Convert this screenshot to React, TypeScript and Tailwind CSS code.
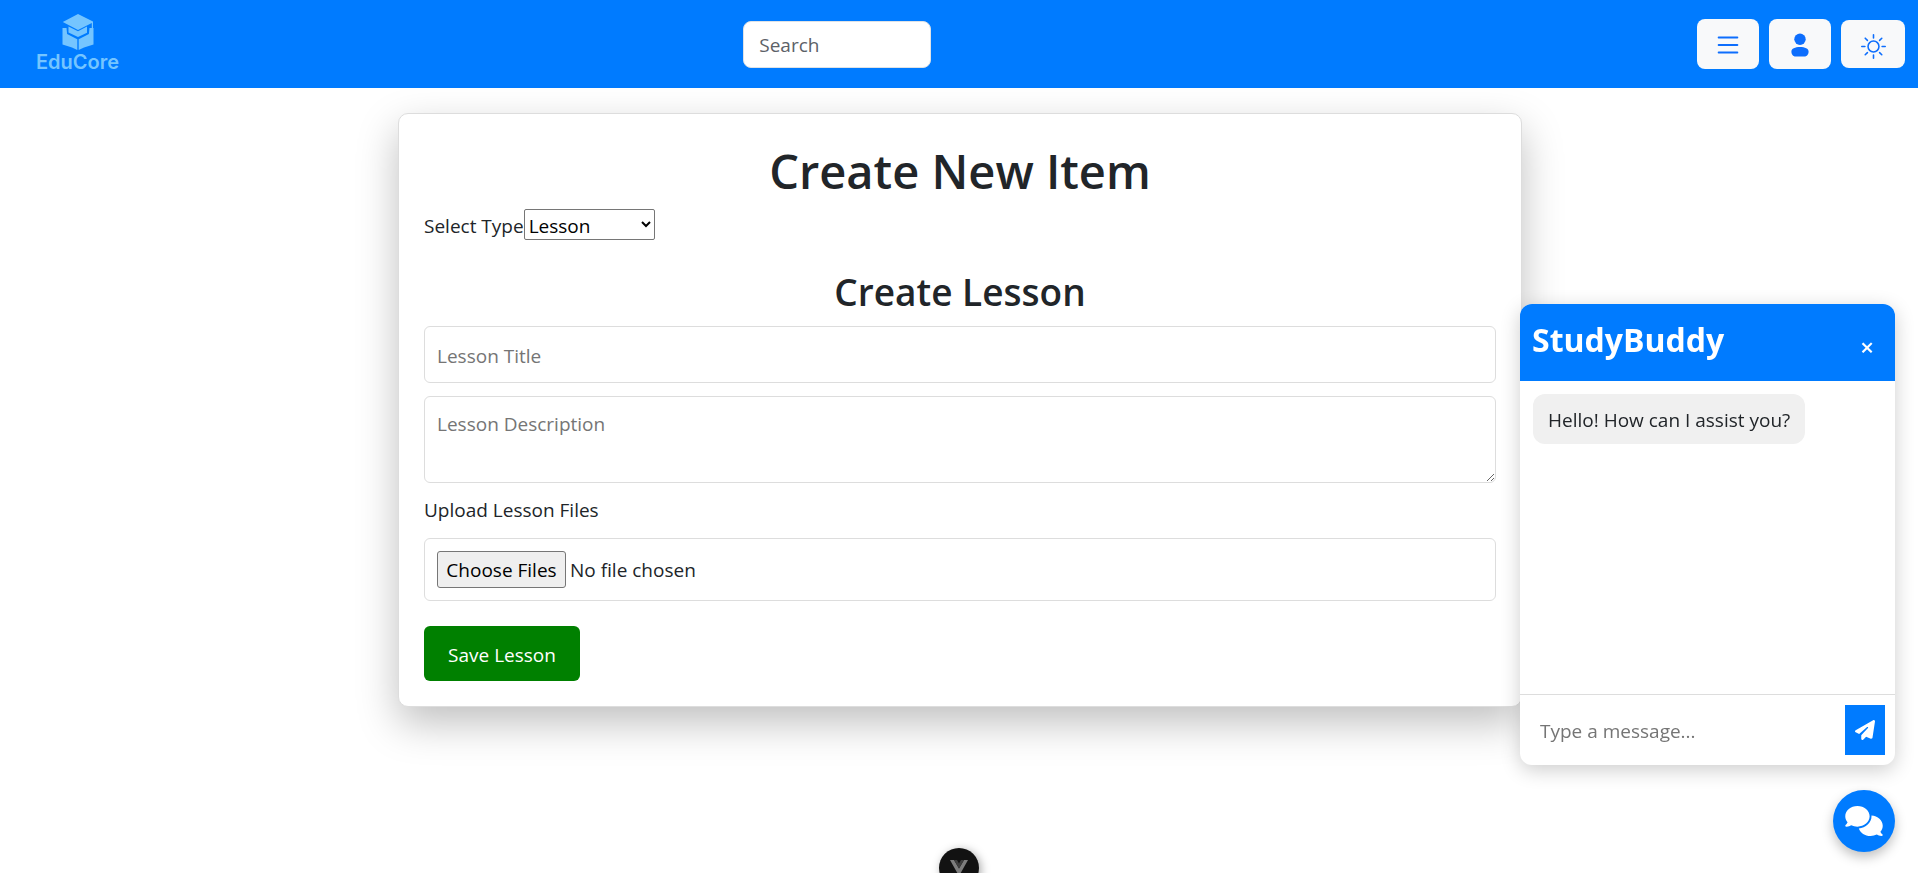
import { useState } from "react";
import { BsList, BsSun } from "react-icons/bs";
import { FaComments, FaPaperPlane } from "react-icons/fa6";

function Logo() {
  return (
    <a href="#" className="ml-[23px] flex w-[83px] flex-col items-center text-[#75c5ff]">
      <svg viewBox="0 0 32 36" className="h-9 w-8" fill="currentColor" aria-hidden="true">
        <path d="M16 0 31 7.500v7h-1.200V9L16 16 .8 8z" />
        <path d="M6.500 12.500 16 17.300l9-4.800v6.300L16 23l-9.500-4.400z" />
        <path d="M.5 14H4.500l.6 6L15.300 25.300V36L10 33.500.5 30.500z" />
        <path d="M31.500 14H27.500l-.6 6L16.700 25.300V36L22 33.500 31.500 30.500z" />
      </svg>
      <span className="font-['Inter',sans-serif] text-xl leading-6 font-semibold">EduCore</span>
    </a>
  );
}

function PersonIcon() {
  return (
    <svg viewBox="0 0 30 30" className="size-[30px]" fill="currentColor" aria-hidden="true">
      <circle cx="15" cy="9.300" r="5.700" />
      <path d="M6.400 21.500C6.400 18.700 10 17 15 17s8.600 1.700 8.600 4.500c0 2.700-1.600 5-4.200 5h-8.800c-2.600 0-4.200-2.300-4.200-5z" />
    </svg>
  );
}

function Header() {
  return (
    <header className="grid h-[88px] grid-cols-[3fr_auto_4fr] items-center bg-[#007bff] px-[13px]">
      <Logo />
      <input
        type="search"
        aria-label="Search"
        placeholder="Search"
        className="h-[47px] w-[188px] rounded-lg border border-[#dee2e6] bg-white px-[15px] pt-0.5 text-[#212529] placeholder:text-[#5c6167]"
      />
      <div className="flex items-center justify-end gap-2.5 text-[#0d6efd]">
        <button type="button" aria-label="Menu" className="flex h-[50px] w-[62px] items-center justify-center rounded-lg bg-[#f8f9fa] pt-0.5">
          <BsList className="size-[30px]" />
        </button>
        <button type="button" aria-label="Profile" className="flex h-[50px] w-[62px] items-center justify-center rounded-lg bg-[#f8f9fa] pt-0.5">
          <PersonIcon />
        </button>
        <button type="button" aria-label="Toggle theme" className="flex h-12 w-16 items-center justify-center rounded-lg bg-[#f8f9fa] pt-1">
          <BsSun className="size-[25px]" />
        </button>
      </div>
    </header>
  );
}

function LessonForm() {
  const field = "block w-full rounded-md border border-[#ddd] bg-white px-3 placeholder:text-[#757575]";
  return (
    <form
      onSubmit={(e) => e.preventDefault()}
      className="mx-auto mt-[25px] w-full max-w-[1124px] rounded-[10px] border border-[#ddd] bg-white p-[25px] shadow-[0_16px_40px_rgba(0,0,0,0.25)]"
    >
      <h1 className="mb-2 pt-0.5 text-center text-[47px] leading-[60px] font-semibold">Create New Item</h1>
      <div className="mb-7 flex h-[31px] items-center">
        <label htmlFor="type" className="pt-0.5">Select Type</label>
        <select id="type" className="h-[31px] w-[131px] rounded-[2px] border border-[#767676] bg-white pt-0.5 text-black">
          <option>Lesson</option>
          <option>Quiz</option>
          <option>Assignment</option>
        </select>
      </div>
      <h2 className="mb-2.5 text-center text-[37px] leading-[48px] font-semibold">Create Lesson</h2>
      <input type="text" aria-label="Lesson Title" placeholder="Lesson Title" className={`${field} mb-[13px] h-[57px] pt-0.5`} />
      <textarea aria-label="Lesson Description" placeholder="Lesson Description" className={`${field} h-[87px] resize pt-[13px]`} />
      <label htmlFor="files" className="mt-[13px] mb-3.5 block leading-7">Upload Lesson Files</label>
      <input
        id="files"
        type="file"
        multiple
        className={`${field} h-[63px] py-3 file:h-[37px] file:w-[129px] file:rounded-[3px] file:border file:border-solid file:border-[#767676] file:bg-[#efefef] file:text-black`}
      />
      <button type="submit" className="mt-[25px] block h-[55px] w-[156px] rounded-md bg-[#008000] pt-0.5 text-white">
        Save Lesson
      </button>
    </form>
  );
}

function Chat() {
  const [open, setOpen] = useState(true);
  return (
    <div className="fixed right-[23px] bottom-[21px] flex flex-col items-end gap-[25px]">
      {open && (
        <section className="flex h-[461px] w-[375px] flex-col overflow-hidden rounded-xl bg-white shadow-[0_5px_20px_rgba(0,0,0,0.2)]">
          <div className="flex h-[77px] items-center justify-between bg-[#007bff] px-3 text-white">
            <h2 className="pb-1.5 text-[32px] leading-10 font-bold">StudyBuddy</h2>
            <button type="button" aria-label="Close" onClick={() => setOpen(false)} className="w-8 pt-2 text-2xl font-semibold">×</button>
          </div>
          <div className="grow p-[13px]">
            <p className="flex h-[50px] w-fit items-center rounded-xl bg-[#f0f0f0] px-[15px] pt-0.5">Hello! How can I assist you?</p>
          </div>
          <div className="flex h-[71px] border-t border-[#ddd] p-2.5">
            <input type="text" aria-label="Message" placeholder="Type a message..." className="min-w-0 grow px-2.5 pt-0.5 placeholder:text-[#757575]" />
            <button type="button" aria-label="Send" className="flex w-10 items-center justify-center bg-[#007bff] text-white">
              <FaPaperPlane className="size-5" />
            </button>
          </div>
        </section>
      )}
      <button
        type="button"
        aria-label="Toggle chat"
        onClick={() => setOpen(!open)}
        className="flex size-[62px] items-center justify-center rounded-full bg-[#007bff] text-white shadow-[0_5px_12px_rgba(0,0,0,0.25)]"
      >
        <FaComments className="h-[30px] w-[38px]" />
      </button>
    </div>
  );
}

function DevToolsBadge() {
  return (
    <button
      type="button"
      aria-label="Vue DevTools"
      className="fixed -bottom-[15px] left-1/2 flex size-10 -translate-x-1/2 items-center justify-center rounded-full bg-[#121212] shadow-[2px_2px_10px_rgba(0,0,0,0.35)]"
    >
      <svg viewBox="0 0 18 16" className="h-4 w-[18px]" aria-hidden="true">
        <path d="M0 0h4l5 8.500L14 0h4L9 16z" fill="#7d7d7d" />
        <path d="M4 0h3l2 3.500L11 0h3L9 8.500z" fill="#3f3f3f" />
      </svg>
    </button>
  );
}

export default function App() {
  return (
    <div className="min-h-screen bg-white font-['Open_Sans','Noto_Sans',sans-serif] text-[19px] leading-7 text-[#212529]">
      <Header />
      <main className="pl-0.5">
        <LessonForm />
      </main>
      <Chat />
      <DevToolsBadge />
    </div>
  );
}
